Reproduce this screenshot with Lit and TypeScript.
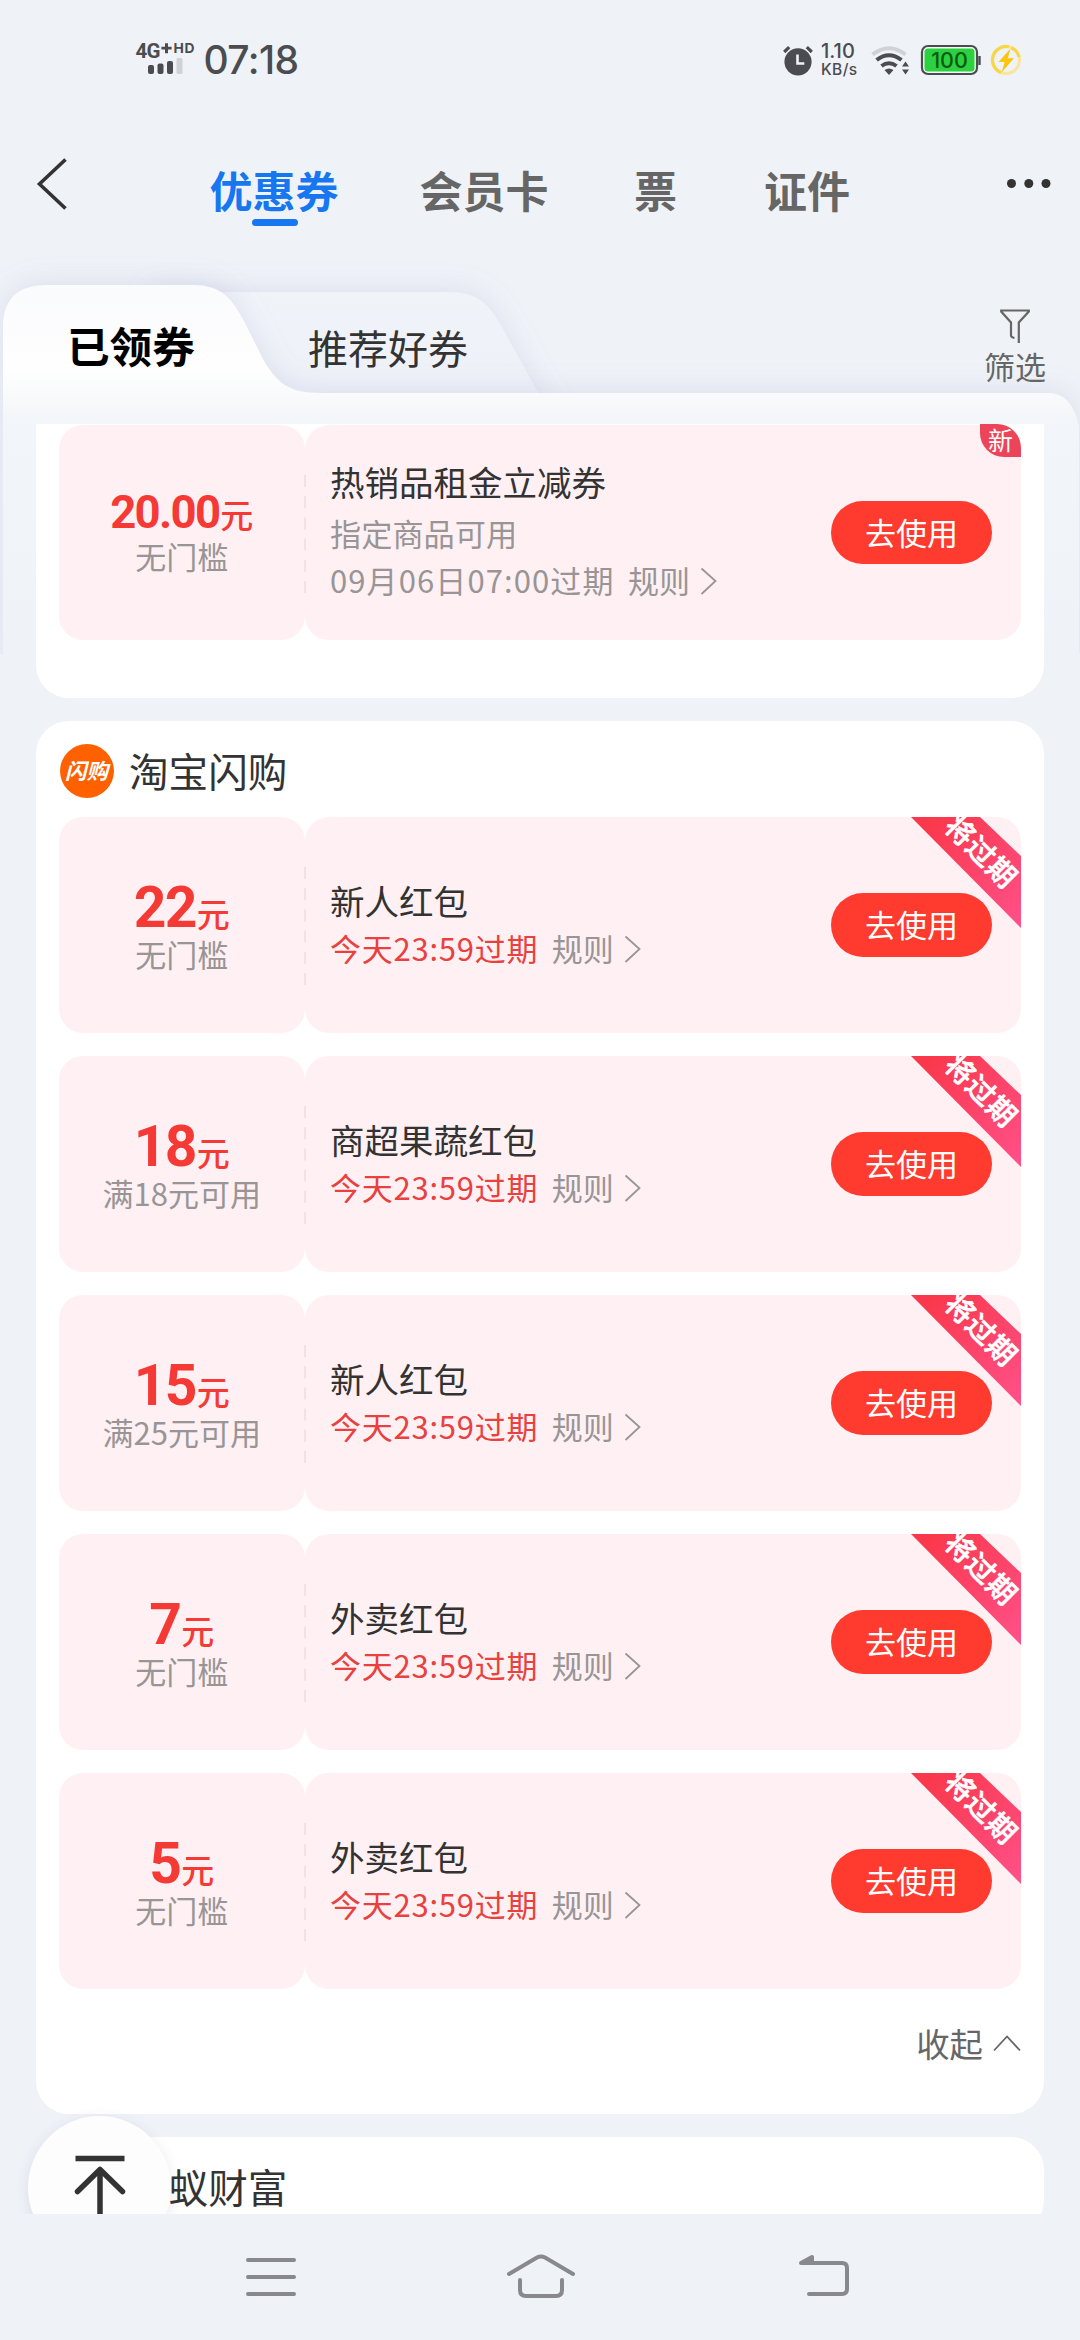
import { LitElement, html, css, svg, nothing } from "lit";
import { customElement, property } from "lit/decorators.js";

interface Coupon {
  amount: string;
  limit: string;
  title: string;
  scope?: string;
  expiry: string;
  urgent?: boolean;
  fresh?: boolean;
}

const FIRST: Coupon = {
  amount: "20.00",
  limit: "无门槛",
  title: "热销品租金立减券",
  scope: "指定商品可用",
  expiry: "09月06日07:00过期",
  fresh: true,
};

const COUPONS: Coupon[] = [
  { amount: "22", limit: "无门槛", title: "新人红包", expiry: "今天23:59过期", urgent: true },
  { amount: "18", limit: "满18元可用", title: "商超果蔬红包", expiry: "今天23:59过期", urgent: true },
  { amount: "15", limit: "满25元可用", title: "新人红包", expiry: "今天23:59过期", urgent: true },
  { amount: "7", limit: "无门槛", title: "外卖红包", expiry: "今天23:59过期", urgent: true },
  { amount: "5", limit: "无门槛", title: "外卖红包", expiry: "今天23:59过期", urgent: true },
];

@customElement("coupon-row")
export class CouponRow extends LitElement {
  @property({ attribute: false }) coupon!: Coupon;

  static styles = css`
    :host { display: block; }
    .row {
      position: relative;
      display: grid;
      grid-template-columns: 245.5px 1fr;
      height: 215.5px;
    }
    .value, .detail { background: #fff1f3; border-radius: 24px; box-sizing: border-box; }
    .value { padding-top: 61.5px; text-align: center; }
    .amount {
      display: flex;
      align-items: baseline;
      justify-content: center;
      height: 57.5px;
      line-height: 58px;
      color: #f53a36;
    }
    .num { font-family: Roboto, "Noto Sans", sans-serif; font-weight: 700; font-size: 57px; letter-spacing: -1.6px; }
    .unit { font-size: 33px; font-weight: 500; margin-left: 1px; }
    .limit { font-size: 31px; line-height: 36px; color: #999596; }
    .value.small { padding-top: 63px; }
    .small .amount { height: 50px; line-height: 50px; }
    .small .num { font-size: 45.5px; letter-spacing: -1.7px; }
    .detail {
      display: flex;
      align-items: center;
      justify-content: space-between;
      padding: 0 29px 0 25px;
      margin-left: 0.5px;
    }
    .text { height: 215.5px; box-sizing: border-box; padding-top: 60.5px; }
    .text.tall { padding-top: 34px; }
    .title { font-size: 34.5px; line-height: 44px; color: #333; }
    .scope { font-size: 31.2px; line-height: 60px; height: 56px; color: #999596; }
    .meta { display: flex; align-items: center; height: 52px; font-size: 31px; color: #999596; }
    .tall .meta { height: 42px; }
    .expiry { letter-spacing: 1.1px; margin-right: 13.5px; }
    .urgent { color: #e8413f; letter-spacing: 0.75px; }
    .arrow { margin: 2px 0 0 10px; }
    .use {
      border: 0;
      width: 161px;
      height: 63.5px;
      border-radius: 32px;
      padding: 0 0 2px;
      background: #ff3b30;
      color: #fff;
      font: inherit;
      font-size: 31px;
    }
    .dash { position: absolute; left: 244.5px; top: 50px; }
    .ribbon { position: absolute; right: 0; top: 0; }
    .fresh {
      position: absolute;
      right: 0;
      top: -0.5px;
      width: 41px;
      height: 33px;
      line-height: 31px;
      text-align: center;
      border-radius: 0 24px 0 24px;
      background: #ec4459;
      color: #fff;
      font-size: 25px;
    }
  `;

  render() {
    const c = this.coupon;
    return html`
      <div class="row">
        <div class="value ${c.scope ? "small" : ""}">
          <div class="amount"><span class="num">${c.amount}</span><span class="unit">元</span></div>
          <div class="limit">${c.limit}</div>
        </div>
        <div class="detail">
          <div class="text ${c.scope ? "tall" : ""}">
            <div class="title">${c.title}</div>
            ${c.scope ? html`<div class="scope">${c.scope}</div>` : nothing}
            <div class="meta">
              <span class="expiry ${c.urgent ? "urgent" : ""}">${c.expiry}</span>
              <span>规则</span>
              <svg class="arrow" width="18" height="28" viewBox="0 0 18 28" fill="none" stroke="#999596" stroke-width="1.8">
                <path d="M1.5 1.5 15.5 14 1.5 27" />
              </svg>
            </div>
          </div>
          <button class="use">去使用</button>
        </div>
        <svg class="dash" width="2" height="120" viewBox="0 0 2 120">
          <path d="M1 0V118" stroke="#f2dcdf" stroke-width="1.6" stroke-dasharray="12 9.2" />
        </svg>
        ${c.urgent
          ? html`<svg class="ribbon" width="110" height="111" viewBox="0 0 110 111">
              <defs>
                <linearGradient id="rg" gradientUnits="userSpaceOnUse" x1="20" y1="0" x2="115" y2="100">
                  <stop offset="0" stop-color="#fa384b" />
                  <stop offset="1" stop-color="#ff5088" />
                </linearGradient>
              </defs>
              <path d="M0 0H69L110 39V111Z" fill="url(#rg)" />
              <text
                transform="translate(70 35) rotate(45)"
                text-anchor="middle"
                y="10"
                fill="#fff"
                stroke="#fff"
                stroke-width="0.6"
                font-size="28.5"
                font-weight="500"
                letter-spacing="0.8"
              >将过期</text>
            </svg>`
          : nothing}
        ${c.fresh ? html`<span class="fresh">新</span>` : nothing}
      </div>
    `;
  }
}

@customElement("app-root")
export class AppRoot extends LitElement {
  static styles = css`
    :host {
      display: block;
      font-family: "Noto Sans CJK SC", "Noto Sans", sans-serif;
    }
    .page {
      position: relative;
      display: flex;
      flex-direction: column;
      width: 1080px;
      height: 2340px;
      overflow: hidden;
      background: #eff2f7;
    }
    .status {
      display: flex;
      justify-content: space-between;
      height: 120px;
      padding: 40px 57px 0 135px;
      box-sizing: border-box;
      color: #4b4c50;
      font-family: Inter, Roboto, sans-serif;
    }
    .side { display: flex; align-items: flex-start; }
    .time { font-size: 39px; line-height: 40px; font-weight: 500; margin-left: 7.5px; letter-spacing: -0.6px; }
    .rate { width: 43px; margin-left: 7px; font-size: 20px; line-height: 19px; font-weight: 500; padding-top: 2px; white-space: nowrap; }
    .rate span { display: block; }
    .rate .kb { font-size: 15.5px; line-height: 17px; letter-spacing: 0.4px; }

    .nav { display: flex; height: 130px; color: #666; }
    .back { margin: 38px 0 0 36px; }
    .tabs {
      display: grid;
      grid-template-columns: 210px 214.5px 130px 1fr;
      width: 730px;
      padding: 40px 0 0 140.5px;
      font-size: 43px;
      line-height: 58px;
      font-weight: 700;
    }
    .tab { white-space: nowrap; }
    .tab.on { color: #1677f0; }
    .tab.on::after {
      content: "";
      display: block;
      width: 46px;
      height: 6.5px;
      margin: 1px 0 0 42px;
      border-radius: 4px;
      background: #1677f0;
    }
    .more { margin: 57px 0 0 auto; padding-right: 28.5px; }

    .subtabs { display: flex; height: 174px; box-sizing: border-box; padding: 0 33px 0 67px; position: relative; }
    .shape { position: absolute; left: 0; top: -20px; }
    .sub { position: relative; line-height: 60px; white-space: nowrap; }
    .sub.on { font-size: 42.6px; font-weight: 700; color: #000; width: 241px; padding-top: 65px; }
    .sub.off { font-size: 40px; color: #333; padding-top: 67px; flex: 1; }
    .filter { position: relative; width: 64px; padding-top: 58px; text-align: center; font-size: 31px; line-height: 40px; color: #666; white-space: nowrap; }
    .filter svg { display: block; margin: 0 auto 1.5px; }

    .list { position: relative; height: 1790px; overflow: hidden; padding: 0 36px; }
    .card { background: #fff; border-radius: 33px; padding: 0 23px; box-sizing: border-box; margin-bottom: 23px; }
    .card.first { height: 274px; padding-top: 0.5px; border-top-left-radius: 0; border-top-right-radius: 0; }
    .card.main { height: 1393px; display: flex; flex-direction: column; gap: 23.5px; }
    .head { display: flex; align-items: center; gap: 15px; height: 96px; padding-top: 4px; box-sizing: border-box; font-size: 39.6px; line-height: 50px; color: #333; }
    .main .head { margin-bottom: -23.5px; }
    .head b { font-weight: 400; margin-top: -2px; }
    .fold { display: flex; justify-content: flex-end; align-items: center; gap: 10px; font-size: 33.4px; line-height: 40px; color: #666; padding-top: 10.5px; }
    .fold svg { margin-top: 1px; }
    .logo { display: block; flex: none; }
    .totop { position: absolute; left: 27.5px; top: 1692px; width: 143px; height: 143px; border-radius: 50%; background: #fdfdfe; box-shadow: 0 3px 14px rgba(60, 60, 130, 0.11); }
    .totop svg { display: block; }

    .softkeys { height: 126px; display: flex; padding-left: 244px; box-sizing: border-box; }
    .softkeys svg { display: block; }
  `;

  private shapes() {
    return svg`
      <defs>
        <linearGradient id="on" gradientUnits="userSpaceOnUse" x1="0" y1="55" x2="0" y2="420">
          <stop offset="0" stop-color="#fafbfd" />
          <stop offset="0.1" stop-color="#fcfcfe" />
          <stop offset="0.23" stop-color="#fefefe" />
          <stop offset="0.3" stop-color="#f9fafb" />
          <stop offset="0.38" stop-color="#f2f5f9" />
          <stop offset="1" stop-color="#eff2f7" />
        </linearGradient>
        <linearGradient id="off" x1="0" y1="0" x2="0" y2="1">
          <stop offset="0" stop-color="#f0f3f8" />
          <stop offset="1" stop-color="#edf0f7" />
        </linearGradient>
        <filter id="sh" x="-10%" y="-30%" width="120%" height="160%">
          <feDropShadow dx="0" dy="-3" stdDeviation="13" flood-color="#9aa0cc" flood-opacity="0.22" />
        </filter>
      </defs>
      <path d="M150 62H450C477 62 489 74 502 97L530 148C542 170 549 180 569 180H150Z" fill="url(#off)" filter="url(#sh)" />
      <path
        d="M3 440V97Q3 55 47 55H192C222 55 232 68 246 95L263 129C276 152 288 163 320 163H1048Q1072 163 1079 196V440Z"
        fill="url(#on)"
        filter="url(#sh)"
      />`;
  }

  render() {
    return html`
      <div class="page">
        <div class="status">
          <div class="side">
            <svg width="61" height="36" viewBox="0 0 61 36" fill="#4b4c50">
              <text x="0.5" y="18" font-size="20.5" font-weight="700" font-family="Roboto" textLength="25">4G</text>
              <path d="M30 3.2h3v3.600h3.600v2.800h-3.600v3.600h-3v-3.600h-3.600v-2.800h3.600z" />
              <text x="38.5" y="13" font-size="13.800" font-weight="700" font-family="Inter" textLength="21">HD</text>
              <rect x="13" y="25" width="6" height="9" rx="2" />
              <rect x="22.5" y="23.5" width="6" height="10.5" rx="2" />
              <rect x="32" y="21" width="6" height="13" rx="2" />
              <rect x="41.5" y="18" width="6" height="16" rx="1.5" fill="#cfd2d8" />
            </svg>
            <span class="time">07:18</span>
          </div>
          <div class="side">
            <svg width="32" height="36" viewBox="0 0 32 36">
              <circle cx="16" cy="21.8" r="13.6" fill="#4b4c50" />
              <path d="M2.2 12 7.2 7.2M29.8 12 24.8 7.2" stroke="#4b4c50" stroke-width="3.2" />
              <path d="M15.5 14.5v9h6.8" fill="none" stroke="#eff2f8" stroke-width="2.6" />
            </svg>
            <div class="rate"><span>1.10</span><span class="kb">KB/s</span></div>
            <svg width="46" height="36" viewBox="0 0 46 36" fill="none" stroke-width="4">
              <path d="M8.5 14.5Q25 2 41.5 14.5" stroke="#d0d2d7" />
              <path d="M12.6 20Q25 10.5 37.5 20" stroke="#4b4c50" />
              <path d="M17.5 26Q25 20.5 32.5 26" stroke="#4b4c50" />
              <path d="M20.5 30Q25 27 29.5 30L25 35Z" fill="#4b4c50" stroke="none" />
              <path d="M38 26.5h7l-3.5-5zM38 29.5h7l-3.500 5z" fill="#4b4c50" stroke="none" />
            </svg>
            <svg width="79" height="38" viewBox="0 0 79 38">
              <rect x="12" y="6" width="55" height="28" rx="6" fill="#f4fbf5" stroke="#4b4c50" stroke-width="2.2" />
              <rect x="14.5" y="8.5" width="50" height="23" rx="3.5" fill="#2bd13e" />
              <path d="M69.5 16v9" stroke="#4b4c50" stroke-width="2.4" />
              <text x="39.5" y="27.6" text-anchor="middle" font-size="21.5" font-weight="500" font-family="Inter" fill="#0b5a14">100</text>
            </svg>
            <svg width="34" height="38" viewBox="0 0 34 38">
              <circle cx="17" cy="20" r="13.5" fill="none" stroke="#f8e6a0" stroke-width="3.2" />
              <path d="M12 32.5A13.5 13.5 0 0 1 20 6.8M22 7.5A13.5 13.5 0 0 1 30 17" fill="none" stroke="#f7d64a" stroke-width="3.2" />
              <path d="M21.5 8.5 9.5 22h6.2l-3.2 10.5L25 18.2h-6.2z" fill="#fcc70a" />
            </svg>
          </div>
        </div>

        <div class="nav">
          <svg class="back" width="33" height="52" viewBox="0 0 33 52" fill="none" stroke="#333" stroke-width="3.6">
            <path d="M29.5 1.5 3.500 26 29.5 50.5" />
          </svg>
          <div class="tabs">
            <span class="tab on">优惠券</span>
            <span class="tab">会员卡</span>
            <span class="tab">票</span>
            <span class="tab">证件</span>
          </div>
          <svg class="more" width="46" height="14" viewBox="0 0 46 14" fill="#333">
            <circle cx="5.5" cy="6.5" r="4.5" /><circle cx="22.8" cy="6.5" r="4.5" /><circle cx="40" cy="6.5" r="4.5" />
          </svg>
        </div>

        <div class="subtabs">
          <svg class="shape" width="1080" height="424" viewBox="0 0 1080 424">${this.shapes()}</svg>
          <span class="sub on">已领券</span>
          <span class="sub off">推荐好券</span>
          <div class="filter">
            <svg width="32" height="36" viewBox="0 0 32 36" fill="none" stroke="#666" stroke-width="2.2">
              <path d="M19.8 35V14.5L29.8 3.5V2.5H2.2V3.5L12 14.5V27.5Q12 29.5 15.5 30" />
            </svg>
            筛选
          </div>
        </div>

        <div class="list">
          <div class="card first"><coupon-row .coupon=${FIRST}></coupon-row></div>
          <div class="card main">
            <div class="head">
              <svg class="logo" width="55" height="56" viewBox="0 0 55 56">
                <circle cx="28" cy="28" r="27" fill="#ff6000" />
                <text x="27.5" y="35.5" text-anchor="middle" font-size="21.5" font-weight="700" font-style="italic" fill="#fff">闪购</text>
              </svg>
              <b>淘宝闪购</b>
            </div>
            ${COUPONS.map((c) => html`<coupon-row .coupon=${c}></coupon-row>`)}
            <div class="fold">
              收起
              <svg width="28" height="18" viewBox="0 0 28 18" fill="none" stroke="#666" stroke-width="1.8">
                <path d="M1 16.5 14 2.5 27 16.5" />
              </svg>
            </div>
          </div>
          <div class="card">
            <div class="head">
              <svg class="logo" width="55" height="56" viewBox="0 0 55 56"><circle cx="28" cy="28" r="27" fill="#1677f0" /></svg>
              <b>蚂蚁财富</b>
            </div>
          </div>
          <div class="totop">
            <svg width="143" height="143" viewBox="0 0 143 143" fill="none" stroke="#333" stroke-width="5.5">
              <path d="M47.5 42.5H96.5" />
              <path d="M49.5 75.5 72 53.5 94.5 75.5M72 54V110" stroke-linecap="round" stroke-linejoin="round" />
            </svg>
          </div>
        </div>

        <div class="softkeys">
          <svg width="620" height="126" viewBox="0 0 620 126" fill="none" stroke="#88898d" stroke-width="4" stroke-linecap="round" stroke-linejoin="round">
            <path d="M4 46H50M4 63H50M4 80H50" />
            <path d="M265 60 293 43.500Q297 41.500 301 43.500L329 60" />
            <path d="M276 66V76Q276 82 282 82H312Q318 82 318 76V66" />
            <path d="M565 49H598Q603 49 603 54V75Q603 80 598 80H565" />
            <path d="M557 49 568 43V49Z" fill="#88898d" />
          </svg>
        </div>
      </div>
    `;
  }
}
